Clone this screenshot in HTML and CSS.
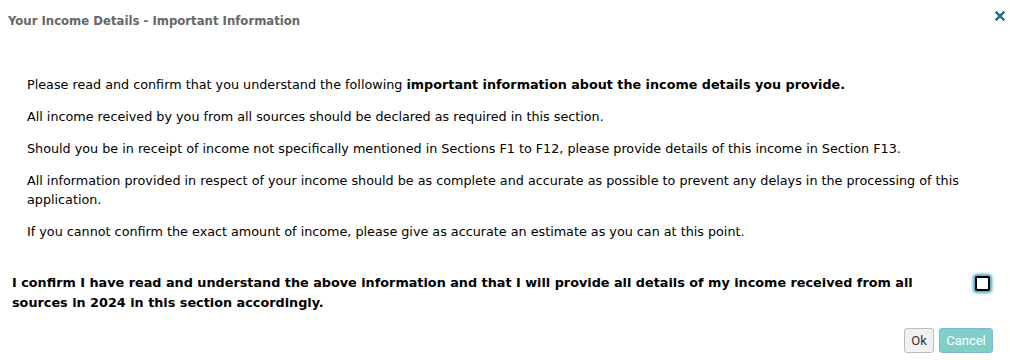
FILE: index.html
```html
<!DOCTYPE html>
<html>
<head>
<meta charset="utf-8">
<link rel="stylesheet" href="styles.css">
</head>
<body>
<div class="dialog">
  <div class="header">
    <span class="title">Your Income Details - Important Information</span>
    <button class="close" aria-label="Close">
      <svg width="10" height="10" viewBox="0 0 10 10"><path d="M1.5 1.5 L8.5 8.5 M8.5 1.5 L1.5 8.5" stroke="#1c6b8c" stroke-width="2.4" stroke-linecap="square"/></svg>
    </button>
  </div>
  <div class="info">
    <p>Please read and confirm that you understand the following <b>important information about the income details you provide.</b></p>
    <p>All income received by you from all sources should be declared as required in this section.</p>
    <p>Should you be in receipt of income not specifically mentioned in Sections F1 to F12, please provide details of this income in Section F13.</p>
    <p>All information provided in respect of your income should be as complete and accurate as possible to prevent any delays in the processing of this application.</p>
    <p>If you cannot confirm the exact amount of income, please give as accurate an estimate as you can at this point.</p>
  </div>
  <div class="confirm">
    <label class="confirm-text" for="cb">I confirm I have read and understand the above information and that I will provide all details of my income received from all sources in 2024 in this section accordingly.</label>
    <span class="checkbox" id="cb"></span>
  </div>
  <div class="footer">
    <button class="btn ok">Ok</button>
    <button class="btn cancel">Cancel</button>
  </div>
</div>
</body>
</html>
```

FILE: styles.css
```css
html, body {
  margin: 0;
  padding: 0;
  background: #fff;
}
.dialog {
  width: 1010px;
  height: 361px;
  box-sizing: border-box;
  font-family: "DejaVu Sans", Verdana, sans-serif;
  color: #000;
}
.header {
  display: flex;
  align-items: center;
  justify-content: space-between;
  height: 40px;
  padding: 0 5px 0 8px;
}
.title {
  font-family: "DejaVu Sans Condensed", "DejaVu Sans", sans-serif;
  font-weight: bold;
  font-size: 13px;
  color: #666;
  margin-top: 1px;
}
.close {
  border: 0;
  background: none;
  padding: 0;
  width: 10px;
  height: 10px;
  display: flex;
  margin-top: -8px;
}
.info {
  padding: 35px 0 0 27px;
  font-size: 12.75px;
  line-height: 19px;
}
.info p {
  margin: 0 0 13px 0;
}
.confirm {
  display: flex;
  justify-content: space-between;
  align-items: flex-start;
  padding: 19px 20px 0 12px;
}
.confirm-text {
  font-weight: bold;
  font-size: 12.8px;
  line-height: 20px;
  width: 940px;
}
.checkbox {
  width: 11px;
  height: 11px;
  border: 2px solid #000;
  border-radius: 2px;
  box-shadow: 0 0 3px 2px #4f9fc6;
  margin-top: 3px;
  background: #fff;
}
.footer {
  display: flex;
  justify-content: flex-end;
  gap: 5px;
  padding: 15px 17px 0 0;
}
.btn {
  font-family: Roboto, "Liberation Sans", sans-serif;
  font-size: 13px;
  height: 25px;
  border-radius: 3px;
  padding: 0 6px;
}
.ok {
  width: 30px;
  background: #f1f1f1;
  border: 1px solid #bdbdbd;
  color: #333;
}
.cancel {
  width: 54px;
  background: #7fcfc8;
  border: 1px solid #82b4dc;
  color: #fff;
}
```
